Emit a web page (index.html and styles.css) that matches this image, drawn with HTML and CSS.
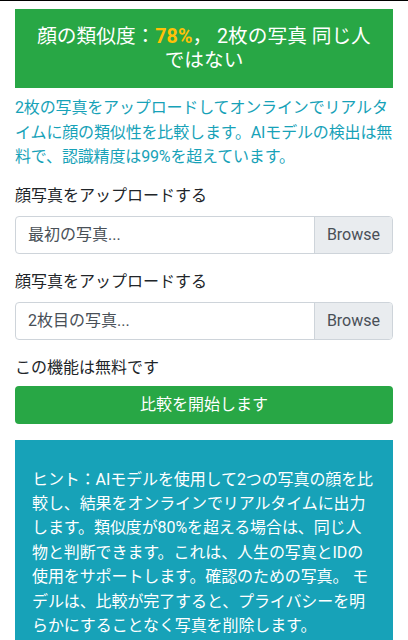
FILE: index.html
```html
<!DOCTYPE html>
<html lang="ja">
<head>
<meta charset="utf-8">
<link rel="stylesheet" href="styles.css">
</head>
<body>
<div class="topline"></div>
<main class="container">
  <div class="result">顔の類似度：<b class="score">78%</b>， 2枚の写真 同じ人ではない</div>
  <p class="lead">2枚の写真をアップロードしてオンラインでリアルタイムに顔の類似性を比較します。AIモデルの検出は無料で、認識精度は99%を超えています。</p>
  <div class="group">
    <label class="label">顔写真をアップロードする</label>
    <div class="file"><span class="file-text">最初の写真...</span><span class="browse">Browse</span></div>
  </div>
  <div class="group">
    <label class="label">顔写真をアップロードする</label>
    <div class="file"><span class="file-text">2枚目の写真...</span><span class="browse">Browse</span></div>
  </div>
  <div class="free">この機能は無料です</div>
  <button class="btn">比較を開始します</button>
  <div class="hint">ヒント：AIモデルを使用して2つの写真の顔を比較し、結果をオンラインでリアルタイムに出力します。類似度が80%を超える場合は、同じ人物と判断できます。これは、人生の写真とIDの使用をサポートします。確認のための写真。 モデルは、比較が完了すると、プライバシーを明らかにすることなく写真を削除します。</div>
</main>
</body>
</html>
```
FILE: styles.css
```css
html, body {
  margin: 0;
  padding: 0;
  background: #fff;
}
body {
  font-family: Roboto, "Noto Sans CJK JP", sans-serif;
  font-size: 16px;
  line-height: 24px;
  color: #212529;
  overflow: hidden;
}
.topline {
  height: 1px;
  background: #000;
}
.container {
  padding: 8px 15px 0;
  display: flex;
  flex-direction: column;
}
.result {
  background: #28a745;
  color: #fff;
  font-size: 19.7px;
  line-height: 24px;
  text-align: center;
  padding: 16px 14px 15px;
}
.score {
  color: #ffc107;
  font-weight: bold;
}
.lead {
  margin: 8px 0 14px;
  color: #17a2b8;
  line-height: 24.5px;
  letter-spacing: -0.15px;
}
.group {
  display: flex;
  flex-direction: column;
  margin-bottom: 16px;
}
.label {
  margin-bottom: 8px;
}
.file {
  display: flex;
  height: 38px;
  box-sizing: border-box;
  border: 1px solid #ced4da;
  border-radius: 4px;
  color: #495057;
  overflow: hidden;
}
.file-text {
  flex: 1;
  padding: 6px 12px;
}
.browse {
  background: #e9ecef;
  border-left: 1px solid #ced4da;
  padding: 6px 12px;
}
.btn {
  margin-top: 6px;
  height: 38px;
  background: #28a745;
  color: #fff;
  border: 0;
  border-radius: 4px;
  font: inherit;
  font-size: 16px;
  padding: 0;
}
.hint {
  margin-top: 16px;
  background: #17a2b8;
  color: #fff;
  padding: 28px 16px 30px 17px;
  line-height: 24.4px;
  letter-spacing: -0.1px;
}
```
